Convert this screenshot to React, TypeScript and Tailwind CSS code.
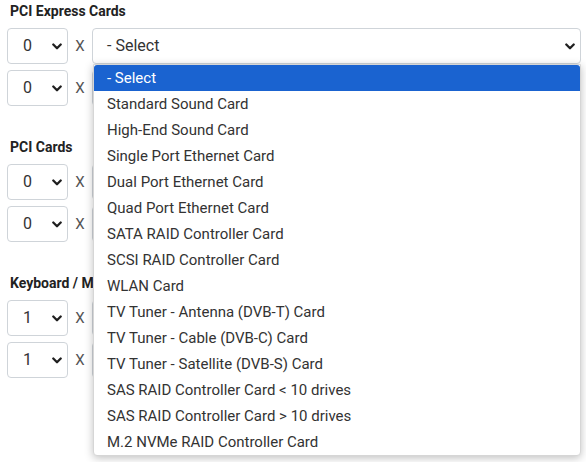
import React from 'react';

const options = [
  '- Select',
  'Standard Sound Card',
  'High-End Sound Card',
  'Single Port Ethernet Card',
  'Dual Port Ethernet Card',
  'Quad Port Ethernet Card',
  'SATA RAID Controller Card',
  'SCSI RAID Controller Card',
  'WLAN Card',
  'TV Tuner - Antenna (DVB-T) Card',
  'TV Tuner - Cable (DVB-C) Card',
  'TV Tuner - Satellite (DVB-S) Card',
  'SAS RAID Controller Card < 10 drives',
  'SAS RAID Controller Card > 10 drives',
  'M.2 NVMe RAID Controller Card',
];

const sections = [
  { title: 'PCI Express Cards', qty: '0' },
  { title: 'PCI Cards', qty: '0' },
  { title: 'Keyboard / Mouse', qty: '1' },
];

function Chevron({ className }: { className?: string }) {
  return (
    <svg viewBox="0 0 10 7" className={className} fill="none">
      <path d="M1.3 1.5l3.7 3.7 3.7-3.7" stroke="#1f1f1f" strokeWidth="2.3" strokeLinecap="round" strokeLinejoin="round" />
    </svg>
  );
}

function QtySelect({ value }: { value: string }) {
  return (
    <div className="flex items-center justify-between w-[61px] h-[36px] border border-[#cfd4d9] rounded-[4px] bg-white pl-[15px] pr-[5px] text-[16px] text-[#333]">
      <span>{value}</span>
      <Chevron className="w-[10px] h-[7px]" />
    </div>
  );
}

function ItemSelect({ label }: { label: boolean }) {
  return (
    <div className="flex-1 flex items-center justify-between h-[36px] border border-[#cfd4d9] rounded-[4px] bg-white pl-[14px] pr-[5px] text-[16px] text-[#333]">
      <span>{label ? '- Select' : ''}</span>
      <Chevron className="w-[10px] h-[7px]" />
    </div>
  );
}

function Row({ qty, label }: { qty: string; label: boolean }) {
  return (
    <div className="flex items-center">
      <QtySelect value={qty} />
      <span className="w-[24px] text-center text-[15px] text-[#555]">X</span>
      <ItemSelect label={label} />
    </div>
  );
}

export default function App() {
  return (
    <div className="relative w-[586px] h-[462px] bg-white overflow-hidden font-['Roboto',sans-serif]">
      <div className="flex flex-col gap-[31px] pl-[7px] pr-[5px] pt-[1px]">
        {sections.map((s, si) => (
          <div key={s.title} className="flex flex-col">
            <h3 className="h-[20px] leading-[20px] pl-[3px] text-[14px] font-bold text-[#222] mb-[7px]">{s.title}</h3>
            <div className="flex flex-col gap-[6px]">
              {/* only the first item select shows its label; the others sit under the open list */}
              <Row qty={s.qty} label={si === 0} />
              <Row qty={s.qty} label={false} />
            </div>
          </div>
        ))}
      </div>

      <ul className="absolute left-[93px] top-[64px] w-[488px] bg-white border border-[#d6d6d6] rounded-b-[4px] shadow-[0_2px_8px_rgba(0,0,0,0.25)] text-[15px] text-[#333]">
        {options.map((o, i) => (
          <li
            key={o}
            className={`h-[26px] leading-[26px] pl-[13px] ${i === 0 ? 'bg-[#1a63d0] text-white rounded-t-[3px]' : ''}`}
          >
            {o}
          </li>
        ))}
      </ul>
    </div>
  );
}
